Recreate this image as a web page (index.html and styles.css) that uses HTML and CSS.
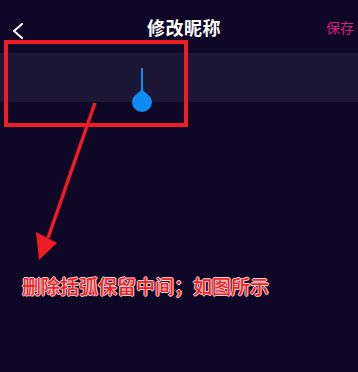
FILE: index.html
```html
<!DOCTYPE html>
<html lang="zh-CN">
<head>
    <meta charset="UTF-8">
    <meta name="viewport" content="width=device-width, initial-scale=1.0">
    <title>修改昵称</title>
    <link rel="stylesheet" href="styles.css">
</head>
<body>

    <div class="page">
        <header class="nav">
            <svg class="back" width="12" height="16" viewBox="0 0 12 16">
                <path d="M10 1 L2 8 L10 15" fill="none" stroke="#ffffff" stroke-width="2" stroke-linecap="round" stroke-linejoin="round"/>
            </svg>
            <div class="title">修改昵称</div>
            <div class="save">保存</div>
        </header>

        <div class="field">
            <svg class="caret" width="22" height="46" viewBox="0 0 22 46">
                <rect x="10" y="0" width="2" height="26" fill="#0d8bf2"/>
                <path d="M11 21 C14 25 21 28 21 34 A10 10 0 0 1 1 34 C1 28 8 25 11 21 Z" fill="#0d8bf2"/>
            </svg>
        </div>

        <p class="caption">删除括弧保留中间；如图所示</p>

        <svg class="markup" width="358" height="372" viewBox="0 0 358 372">
            <rect x="6" y="42" width="180" height="83" fill="none" stroke="#ee1c25" stroke-width="4"/>
            <line x1="95" y1="103" x2="48" y2="238" stroke="#ee1c25" stroke-width="3.5"/>
            <polygon points="36,232 57,243 39,260" fill="#ee1c25"/>
        </svg>
    </div>

</body>
</html>
```

FILE: styles.css
```css
body, html {
    margin: 0;
    padding: 0;
    background-color: #0e0826;
    font-family: "Noto Sans CJK SC", "Noto Sans", sans-serif;
}

.page {
    position: relative;
    width: 358px;
    height: 372px;
    overflow: hidden;
}

.nav {
    display: flex;
    align-items: center;
    height: 53px;
    padding: 0 4px 0 12px;
    box-sizing: border-box;
}

.back {
    margin-top: 8px;
}

.title {
    flex: 1;
    padding-left: 18px;
    text-align: center;
    color: #ffffff;
    font-size: 18px;
    font-weight: 700;
    letter-spacing: 0.5px;
}

.save {
    margin-top: 1px;
    color: #d81f80;
    font-size: 14px;
}

.field {
    position: relative;
    height: 49px;
    background-color: #1c1734;
}

.caret {
    position: absolute;
    left: 131px;
    top: 15px;
}

.caption {
    margin: 172px 0 0 22px;
    color: #f01d25;
    font-size: 19px;
    font-weight: 500;
    line-height: 24px;
    text-shadow: 1px 0 0 #ffd6d6, -1px 0 0 #ffd6d6, 0 1px 0 #ffd6d6, 0 -1px 0 #ffd6d6;
}

.markup {
    position: absolute;
    left: 0;
    top: 0;
    pointer-events: none;
}
```
